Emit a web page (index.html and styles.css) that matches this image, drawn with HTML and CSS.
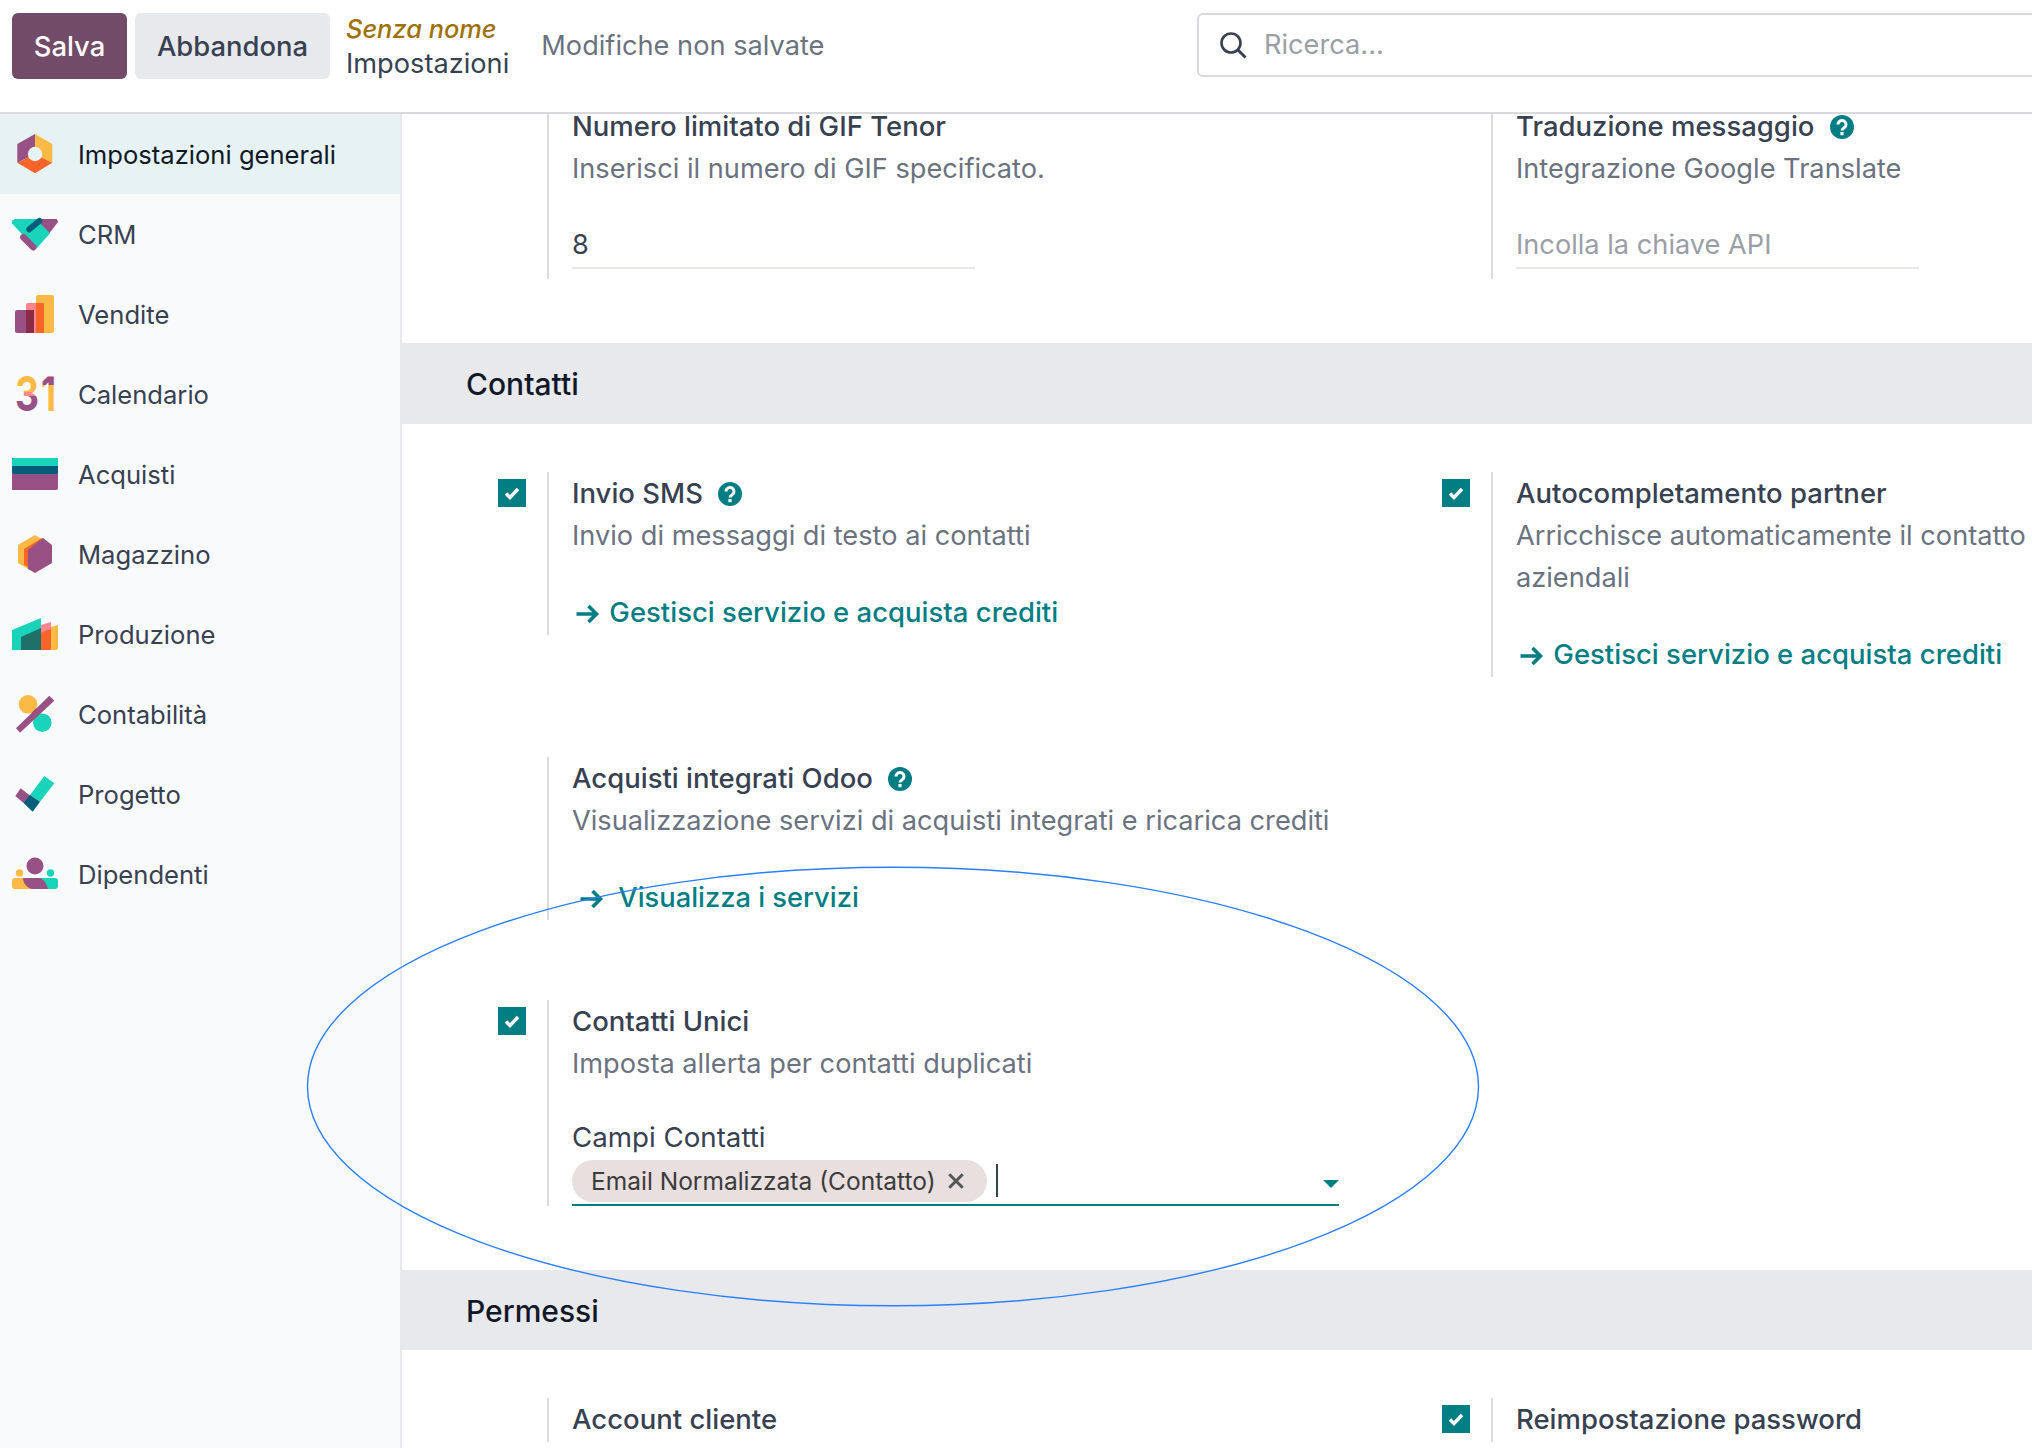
FILE: index.html
```html
<!DOCTYPE html>
<html lang="it">
<head>
    <meta charset="UTF-8">
    <title>Impostazioni</title>
    <link rel="stylesheet" href="styles.css">
</head>
<body>
    <header class="topbar">
        <div class="topbar-left">
            <button class="btn btn-primary">Salva</button>
            <button class="btn btn-secondary">Abbandona</button>
            <div class="crumbs">
                <a href="#" class="crumb-link">Senza nome</a>
                <span class="crumb-current">Impostazioni</span>
            </div>
            <span class="unsaved">Modifiche non salvate</span>
        </div>
        <div class="search">
            <svg class="search-icon" viewBox="0 0 28 28"><circle cx="12" cy="12" r="9.5" fill="none" stroke="#374151" stroke-width="2.6"/><path d="M19 19l7.5 7.5" stroke="#374151" stroke-width="2.8" fill="none"/></svg>
            <span class="search-text">Ricerca...</span>
        </div>
    </header>

    <div class="main">
        <aside class="sidebar">
            <a href="#" class="app active">
                <svg class="app-icon" viewBox="0 0 46 46"><path d="M23 3L5.3 13V31.7L23 23.3Z" fill="#985184"/><path d="M23 3L40.3 13V31.7L23 23.3Z" fill="#FBB945"/><path d="M5.3 31.7L23 23.3L40.3 31.7L23 42.3Z" fill="#F9642A"/><circle cx="23" cy="23" r="7.2" fill="#e6f2f3"/></svg>
                <span>Impostazioni generali</span>
            </a>
            <a href="#" class="app">
                <svg class="app-icon" viewBox="0 0 46 46"><path d="M23 8H44.7L46.3 10.7L34.7 25.7Z" fill="#985184"/><path d="M0 9.7L3 8H24L38 22.3L24.7 37.3L21.3 35.7L0 12.3Z" fill="#1AD3BB"/><path d="M17.3 18.3L27.3 10" stroke="#005E7A" stroke-width="6" stroke-linecap="round" fill="none"/><path d="M11.3 26.3L21.3 36.3" stroke="#985184" stroke-width="6.5" stroke-linecap="round" fill="none"/></svg>
                <span>CRM</span>
            </a>
            <a href="#" class="app">
                <svg class="app-icon" viewBox="0 0 46 46"><rect x="24" y="4" width="18" height="38" rx="2" fill="#FBB945"/><rect x="14" y="12" width="18" height="30" rx="2" fill="#FC868B"/><rect x="24" y="12" width="8" height="30" fill="#F9642A"/><rect x="3" y="19" width="19" height="23" rx="2" fill="#985184"/><rect x="14" y="19" width="8" height="23" fill="#8A2B48"/></svg>
                <span>Vendite</span>
            </a>
            <a href="#" class="app">
                <svg class="app-icon" viewBox="0 0 46 46">
                    <defs>
                        <linearGradient id="three" x1="0" y1="0" x2="0" y2="1"><stop offset="0.47" stop-color="#FBB945"/><stop offset="0.47" stop-color="#FC868B"/><stop offset="0.55" stop-color="#FC868B"/><stop offset="0.55" stop-color="#985184"/></linearGradient>
                        <linearGradient id="one" x1="0" y1="0" x2="0" y2="1"><stop offset="0.22" stop-color="#FC868B"/><stop offset="0.22" stop-color="#985184"/><stop offset="0.36" stop-color="#985184"/><stop offset="0.36" stop-color="#FBB945"/></linearGradient>
                    </defs>
                    <text x="3" y="40" class="cal-digit" fill="url(#three)" textLength="24" lengthAdjust="spacingAndGlyphs">3</text><text x="29" y="40" class="cal-digit" fill="url(#one)" textLength="15" lengthAdjust="spacingAndGlyphs">1</text>
                </svg>
                <span>Calendario</span>
            </a>
            <a href="#" class="app">
                <svg class="app-icon" viewBox="0 0 46 46"><path d="M0 7H46V37a2 2 0 0 1-2 2H0Z" fill="#985184"/><path d="M0 7H46V21a2 2 0 0 1-2 2H3a3 3 0 0 1-3-3Z" fill="#005E7A"/><path d="M2 7H46V15H0V9a2 2 0 0 1 2-2Z" fill="#1AD3BB"/></svg>
                <span>Acquisti</span>
            </a>
            <a href="#" class="app">
                <svg class="app-icon" viewBox="0 0 46 46"><path d="M23 4L6 14V32L16 38V19L31 9L28 7Z" fill="#FBB945"/><path d="M12 18L30 7L34 10L16 21V36L12 34Z" fill="#F9642A"/><path d="M31 7L40 14V32L23 42L16 38V19Z" fill="#985184"/></svg>
                <span>Magazzino</span>
            </a>
            <a href="#" class="app">
                <svg class="app-icon" viewBox="0 0 46 46"><path d="M39 16L46 14V37a2 2 0 0 1-2 2H38Z" fill="#FBB945"/><path d="M29 14L39 11V37a2 2 0 0 1-2 2H28Z" fill="#FC868B"/><path d="M28 22L39 18V37a2 2 0 0 1-2 2H28Z" fill="#F9642A"/><path d="M0 19L29 7V39H0Z" fill="#1AD3BB"/><path d="M9 26L29 17V39H9Z" fill="#20706A"/></svg>
                <span>Produzione</span>
            </a>
            <a href="#" class="app">
                <svg class="app-icon" viewBox="0 0 46 46">
                    <defs><clipPath id="sun"><circle cx="16" cy="13.3" r="9.3"/></clipPath></defs>
                    <circle cx="16" cy="13.3" r="9.3" fill="#FBB945"/><circle cx="30.3" cy="31.7" r="9.3" fill="#1AD3BB"/>
                    <path d="M4 37.3L8 41.7L42.3 9.7L37.3 4.7Z" fill="#985184"/>
                    <path d="M4 37.3L8 41.7L42.3 9.7L37.3 4.7Z" fill="#6F2E32" clip-path="url(#sun)"/>
                </svg>
                <span>Contabilità</span>
            </a>
            <a href="#" class="app">
                <svg class="app-icon" viewBox="0 0 46 46"><path d="M32.3 5L42.3 12.3L28 30.7L18 24Z" fill="#1AD3BB"/><path d="M8.7 17.3L18.7 25L11.3 31.7L3.3 25Z" fill="#985184"/><path d="M18 24L28 30.7L20.7 40.7L11.3 31.7Z" fill="#005E7A"/></svg>
                <span>Progetto</span>
            </a>
            <a href="#" class="app">
                <svg class="app-icon" viewBox="0 0 46 46"><circle cx="23" cy="15" r="8.5" fill="#985184"/><circle cx="7.5" cy="22" r="3.7" fill="#FBB945"/><circle cx="38.5" cy="22" r="3.7" fill="#1AD3BB"/><path d="M3 27H23V38H3a3 3 0 0 1-3-3V30a3 3 0 0 1 3-3Z" fill="#FBB945"/><path d="M23 27H43a3 3 0 0 1 3 3V35a3 3 0 0 1-3 3H23Z" fill="#1AD3BB"/><path d="M11 27H28c5 2 7 7 8 11H20c-5-1-9-6-9-11Z" fill="#985184"/></svg>
                <span>Dipendenti</span>
            </a>
        </aside>

        <main class="content">
            <div class="settings settings-cut">
                <div class="setting">
                    <div class="setting-check"></div>
                    <div class="setting-body">
                        <div class="setting-title">Numero limitato di GIF Tenor</div>
                        <div class="setting-desc">Inserisci il numero di GIF specificato.</div>
                        <div class="field">8</div>
                    </div>
                </div>
                <div class="setting">
                    <div class="setting-check"></div>
                    <div class="setting-body">
                        <div class="setting-title">Traduzione messaggio
                            <svg class="help" viewBox="0 0 24 24"><circle cx="12" cy="12" r="12" fill="#017E84"/><path d="M8 9.5a4 4 0 1 1 6.2 3.3c-1.5 1-2.2 1.5-2.2 2.7" fill="none" stroke="#fff" stroke-width="3"/><rect x="10.4" y="17" width="3.2" height="3.2" fill="#fff"/></svg>
                        </div>
                        <div class="setting-desc">Integrazione Google Translate</div>
                        <div class="field field-empty">Incolla la chiave API</div>
                    </div>
                </div>
            </div>

            <h2 class="band">Contatti</h2>
            <div class="settings">
                <div class="setting">
                    <div class="setting-check"><span class="checkbox"><svg viewBox="0 0 28 28"><path d="M8 14.5l4 4 8-8.5" fill="none" stroke="#fff" stroke-width="3.4"/></svg></span></div>
                    <div class="setting-body">
                        <div class="setting-title">Invio SMS
                            <svg class="help" viewBox="0 0 24 24"><circle cx="12" cy="12" r="12" fill="#017E84"/><path d="M8 9.5a4 4 0 1 1 6.2 3.3c-1.5 1-2.2 1.5-2.2 2.7" fill="none" stroke="#fff" stroke-width="3"/><rect x="10.4" y="17" width="3.2" height="3.2" fill="#fff"/></svg>
                        </div>
                        <div class="setting-desc">Invio di messaggi di testo ai contatti</div>
                        <a href="#" class="setting-link">
                            <svg class="arrow" viewBox="0 0 24 20"><path d="M1 10H21M13 2l8 8-8 8" fill="none" stroke="#017E84" stroke-width="3.6"/></svg>
                            Gestisci servizio e acquista crediti
                        </a>
                    </div>
                </div>
                <div class="setting">
                    <div class="setting-check"><span class="checkbox"><svg viewBox="0 0 28 28"><path d="M8 14.5l4 4 8-8.5" fill="none" stroke="#fff" stroke-width="3.4"/></svg></span></div>
                    <div class="setting-body">
                        <div class="setting-title">Autocompletamento partner</div>
                        <div class="setting-desc">Arricchisce automaticamente il contatto con i dati<br>aziendali</div>
                        <a href="#" class="setting-link">
                            <svg class="arrow" viewBox="0 0 24 20"><path d="M1 10H21M13 2l8 8-8 8" fill="none" stroke="#017E84" stroke-width="3.6"/></svg>
                            Gestisci servizio e acquista crediti
                        </a>
                    </div>
                </div>
                <div class="setting">
                    <div class="setting-check"></div>
                    <div class="setting-body">
                        <div class="setting-title">Acquisti integrati Odoo
                            <svg class="help" viewBox="0 0 24 24"><circle cx="12" cy="12" r="12" fill="#017E84"/><path d="M8 9.5a4 4 0 1 1 6.2 3.3c-1.5 1-2.2 1.5-2.2 2.7" fill="none" stroke="#fff" stroke-width="3"/><rect x="10.4" y="17" width="3.2" height="3.2" fill="#fff"/></svg>
                        </div>
                        <div class="setting-desc">Visualizzazione servizi di acquisti integrati e ricarica crediti</div>
                        <a href="#" class="setting-link setting-link-alt">
                            <svg class="arrow" viewBox="0 0 24 20"><path d="M1 10H21M13 2l8 8-8 8" fill="none" stroke="#017E84" stroke-width="3.6"/></svg>
                            Visualizza i servizi
                        </a>
                    </div>
                </div>
                <div class="setting"></div>
                <div class="setting">
                    <div class="setting-check"><span class="checkbox"><svg viewBox="0 0 28 28"><path d="M8 14.5l4 4 8-8.5" fill="none" stroke="#fff" stroke-width="3.4"/></svg></span></div>
                    <div class="setting-body">
                        <div class="setting-title">Contatti Unici</div>
                        <div class="setting-desc">Imposta allerta per contatti duplicati</div>
                        <div class="tags-label">Campi Contatti</div>
                        <div class="tags-input">
                            <span class="tag">Email Normalizzata (Contatto) <svg class="tag-x" viewBox="0 0 16 16"><path d="M2 2L14 14M14 2L2 14" stroke="#555" stroke-width="2.6"/></svg></span>
                            <span class="caret-line"></span>
                            <span class="dropdown"></span>
                        </div>
                    </div>
                </div>
            </div>

            <h2 class="band">Permessi</h2>
            <div class="settings">
                <div class="setting">
                    <div class="setting-check"></div>
                    <div class="setting-body">
                        <div class="setting-title">Account cliente</div>
                    </div>
                </div>
                <div class="setting">
                    <div class="setting-check"><span class="checkbox"><svg viewBox="0 0 28 28"><path d="M8 14.5l4 4 8-8.5" fill="none" stroke="#fff" stroke-width="3.4"/></svg></span></div>
                    <div class="setting-body">
                        <div class="setting-title">Reimpostazione password</div>
                    </div>
                </div>
            </div>
        </main>
    </div>

    <!-- annotation drawn on top of the screenshot -->
    <svg class="annotation" viewBox="0 0 1174 442"><ellipse cx="587" cy="220.5" rx="585.5" ry="219.3" fill="none" stroke="#2a7fff" stroke-width="1.4"/></svg>
</body>
</html>
```

FILE: styles.css
```css
* {
    box-sizing: border-box;
}

html, body {
    height: 100%;
}

body {
    margin: 0;
    overflow: hidden;
    font-family: Inter, "Noto Sans", sans-serif;
    font-size: 27.2px;
    line-height: 42px;
    color: #374151;
    background-color: #fff;
}

a {
    text-decoration: none;
}

/* top bar */
.topbar {
    display: flex;
    align-items: center;
    height: 114px;
    padding-bottom: 20px;
    border-bottom: 2px solid #d8dadd;
    overflow: hidden;
}

.topbar-left {
    display: flex;
    align-items: center;
    flex: 0 0 1197px;
    padding-left: 12px;
}

.btn {
    height: 66px;
    padding: 0;
    border: none;
    border-radius: 6px;
    font-family: inherit;
    font-size: 27.4px;
    font-weight: 500;
}

.btn-primary {
    width: 115px;
    background-color: #714b67;
    color: #fff;
}

.btn-secondary {
    width: 195px;
    margin-left: 8px;
    margin-right: 16px;
    background-color: #e7e9ed;
    color: #374151;
}

.crumbs {
    display: flex;
    flex-direction: column;
    line-height: 35px;
}

.crumb-link {
    font-style: italic;
    font-weight: 500;
    font-size: 25.4px;
    color: #a07000;
}

.unsaved {
    margin-left: 32px;
    color: #6b7280;
}

.search {
    display: flex;
    align-items: center;
    flex: 0 0 1000px;
    height: 64px;
    margin-bottom: 2px;
    padding-left: 20px;
    border: 2px solid #d8dadd;
    border-radius: 6px;
}

.search-icon {
    width: 28px;
    height: 28px;
}

.search-text {
    margin-left: 17px;
    color: #9a9ea6;
}

/* sidebar */
.main {
    display: flex;
    height: 1334px;
}

.sidebar {
    flex: 0 0 402px;
    border-right: 2px solid #e7e9ed;
    background-color: #f9fafb;
}

.app {
    display: flex;
    align-items: center;
    height: 80px;
    padding-left: 12px;
    font-size: 25.6px;
    color: #374151;
}

.app span {
    padding-top: 2px;
}

.app.active {
    background-color: #e6f2f3;
    color: #111827;
}

.app-icon {
    width: 46px;
    height: 46px;
    margin-right: 20px;
}

.cal-digit {
    font-size: 48px;
    font-weight: 700;
}

/* settings */
.content {
    flex: 1;
    min-width: 0;
    overflow: hidden;
}

.settings {
    display: grid;
    grid-template-columns: 944px 944px;
    row-gap: 80px;
    padding: 48px 0 0 96px;
}

.settings-cut {
    margin-top: -9px;
    padding-top: 0;
}

.setting {
    display: flex;
    align-items: flex-start;
}

.setting-check {
    flex: 0 0 49px;
    padding-top: 7px;
}

.checkbox {
    display: block;
    width: 28px;
    height: 28px;
    background-color: #017e84;
}

.checkbox svg {
    display: block;
}

.setting-body {
    width: 792px;
    padding-left: 23px;
    padding-bottom: 2px;
    border-left: 2px solid #d8dadd;
}

.setting-title {
    font-size: 27.5px;
    font-weight: 500;
}

.help {
    width: 24px;
    height: 24px;
    margin-left: 8px;
    vertical-align: -3px;
}

.setting-desc {
    margin-bottom: -1px;
    padding-top: 1px;
    color: #6b7280;
}

.setting-link {
    display: block;
    margin-top: 35px;
    padding-left: 3px;
    font-size: 27.5px;
    font-weight: 500;
    color: #017e84;
}

.setting-link-alt {
    margin-top: 36px;
    margin-bottom: -1px;
    padding-left: 7px;
    font-size: 27.3px;
}

.arrow {
    width: 25px;
    height: 20px;
    margin-right: 2px;
    vertical-align: -2px;
}

.setting-link-alt .arrow {
    margin-right: 7px;
}

.field {
    width: 403px;
    height: 46px;
    margin-top: 34px;
    margin-bottom: 8px;
    padding-top: 1px;
    border-bottom: 2px solid #e7e9ed;
}

.field-empty {
    color: #9a9ea6;
}

.tags-label {
    margin-top: 32px;
    font-size: 27.7px;
}

.tags-input {
    display: flex;
    align-items: center;
    height: 48px;
    margin-bottom: -2px;
    border-bottom: 2px solid #017e84;
}

.tag {
    display: flex;
    align-items: center;
    height: 42px;
    padding: 0 22px 0 19px;
    border-radius: 21px;
    background-color: #e9dfdf;
    font-size: 24.5px;
    color: #3b3b3b;
}

.tag-x {
    width: 18px;
    height: 18px;
    margin-left: 11px;
}

.caret-line {
    width: 2px;
    height: 33px;
    margin-left: 9px;
    background-color: #374151;
}

.dropdown {
    margin-left: auto;
    margin-top: 6px;
    border-top: 8px solid #017e84;
    border-left: 8px solid transparent;
    border-right: 8px solid transparent;
}

.band {
    height: 80.5px;
    margin: 64px 0 0;
    padding: 1px 0 0 64px;
    background-color: #e7e9ed;
    font-size: 30px;
    font-weight: 500;
    line-height: 80px;
    color: #111827;
}

.annotation {
    position: absolute;
    left: 306px;
    top: 866px;
    width: 1174px;
    height: 442px;
    pointer-events: none;
}
```
